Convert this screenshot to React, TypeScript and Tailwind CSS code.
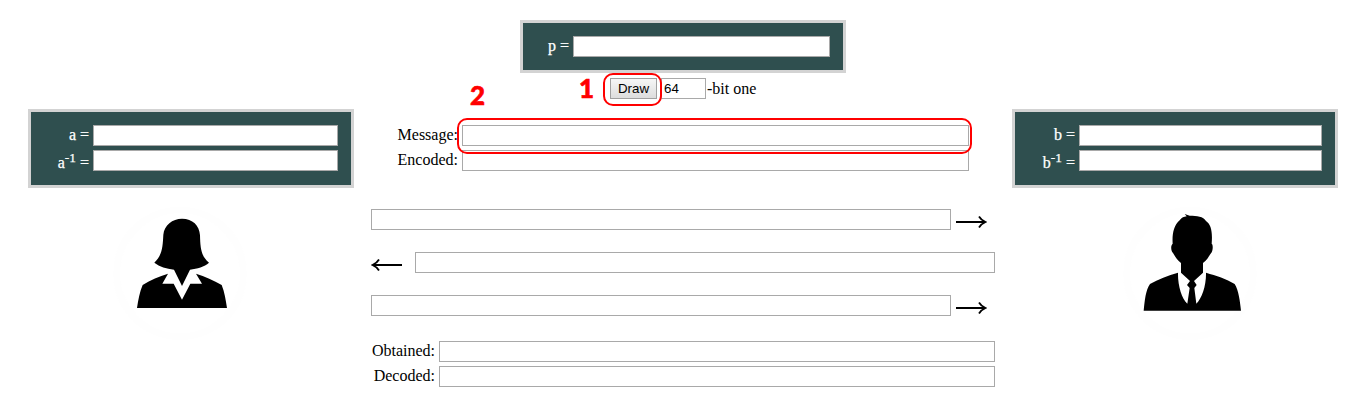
import type { ReactNode } from 'react';

function Field({ className, value, label }: { className: string; value?: string; label: string }) {
  return (
    <input
      type="text"
      aria-label={label}
      defaultValue={value}
      className={`block h-[21px] shrink-0 border border-[#a9a9a9] bg-white px-[2px] font-['Liberation_Sans',sans-serif] text-[13.333px] leading-none text-black outline-none ${className}`}
    />
  );
}

function Panel({ children }: { children: ReactNode }) {
  return (
    <div className="flex w-[326px] flex-col gap-1 border-3 border-[#d3d3d3] bg-[#2f4f4f] px-[13px] pt-[13px] text-white [-webkit-text-stroke:0.25px_white]">
      {children}
    </div>
  );
}

function Row({ label, className = '', children }: { label: ReactNode; className?: string; children: ReactNode }) {
  return (
    <div className={`flex h-[21px] justify-end ${className}`}>
      <span className="mr-1 whitespace-pre leading-[20px]">{label}</span>
      {children}
    </div>
  );
}

function Inverse({ name }: { name: string }) {
  return (
    <span className="relative top-[3px]">
      {name}
      <sup className="-top-[6px] text-[13.333px] leading-none">-1</sup> =
    </span>
  );
}

function Arrow({ left = false }: { left?: boolean }) {
  return (
    <svg width="31" height="13" viewBox="0 0 31 13" fill="none" className={left ? '-scale-x-100' : ''}>
      <path d="M0 7H29" stroke="black" strokeWidth="2" />
      <path d="M23 1.5Q25 5 29.5 7Q25 9 23 12.5" stroke="black" strokeWidth="1.8" />
    </svg>
  );
}

function Woman() {
  return (
    <svg width="160" height="150" viewBox="0 0 480 450">
      <circle cx="240" cy="235" r="190" fill="none" stroke="#fefefe" strokeWidth="20" />
      <path d="M246 71C278 71 298 91 300 121C301 162 304 184 327 203C313 216 292 221 270 224L246 273L222 224C199 221 179 215 163 203C187 180 188 156 190 119C193 90 217 71 246 71Z" />
      <path d="M204 236L187 266H221L246 314L271 266H306L288 236C315 244 341 256 365 270C374 292 377 315 381 339H111C115 314 119 291 128 270C152 254 177 244 204 236Z" />
    </svg>
  );
}

function Man() {
  return (
    <svg width="160" height="150" viewBox="0 0 480 450">
      <circle cx="240" cy="235" r="190" fill="none" stroke="#fefefe" strokeWidth="20" />
      <path d="M224 57L239 62C261 62 280 64 288 78C303 88 308 109 305 146C310 149 309 169 303 175C297 182 292 195 279 204V233L252 258L260 270L253 279L259 326C276 310 289 271 288 233C319 242 349 251 374 267C386 286 390 319 393 347H101C104 318 107 284 120 267C144 252 174 242 204 233C203 271 215 310 232 326L239 279L231 270L240 258L213 233V204C200 194 195 183 189 174C182 168 182 150 188 146C186 119 191 90 209 76C215 68 222 65 230 64Z" />
    </svg>
  );
}

export default function App() {
  return (
    <main className="relative h-[417px] w-[1366px] overflow-hidden bg-white pt-5 font-['Liberation_Serif',serif] text-base text-black">
      <div className="ml-[520px] flex h-[53px] w-[326px]">
        <Panel>
          <Row label="p =">
            <Field label="p" className="w-[257px]" />
          </Row>
        </Panel>
      </div>
      <div className="mt-[5px] ml-[610px] flex h-[21px]">
        <button className="h-[21px] w-[47px] border border-[#a0a0a0] bg-linear-to-b from-[#f6f6f6] to-[#dddddd] font-['Liberation_Sans',sans-serif] text-[13.333px] leading-[19px]">
          Draw
        </button>
        <Field label="Bits" value="64" className="ml-1 w-[45px]" />
        <span className="ml-px leading-[21px]">-bit one</span>
      </div>

      <div className="mt-[10px] ml-7 flex gap-[17px]">
        <section className="w-[326px]">
          <div className="flex h-[79px]">
            <Panel>
              <Row label="a =">
                <Field label="a" className="w-[245px]" />
              </Row>
              <Row label={<Inverse name="a" />}>
                <Field label="Inverse of a" className="w-[245px]" />
              </Row>
            </Panel>
          </div>
          <div className="mt-[7px] ml-[72px]">
            <Woman />
          </div>
        </section>

        <section className="w-[624px] pt-4">
          <div className="flex w-[598px] flex-col gap-1">
            <Row label="Message:">
              <Field label="Message" className="w-[507px]" />
            </Row>
            <Row label="Encoded:">
              <Field label="Encoded" className="w-[507px]" />
            </Row>
          </div>
          <div className="mt-[38px] flex flex-col gap-[22px]">
            <div className="flex h-[21px] gap-[5px]">
              <Field label="First transmission" className="w-[580px]" />
              <span className="pt-[6px]"><Arrow /></span>
            </div>
            <div className="flex h-[21px] justify-between">
              <span className="pt-[6px]"><Arrow left /></span>
              <Field label="Second transmission" className="w-[580px]" />
            </div>
            <div className="flex h-[21px] gap-[5px]">
              <Field label="Third transmission" className="w-[580px]" />
              <span className="pt-[6px]"><Arrow /></span>
            </div>
          </div>
          <div className="mt-[25px] flex flex-col gap-1">
            <Row label="Obtained:">
              <Field label="Obtained" className="w-[556px]" />
            </Row>
            <Row label="Decoded:">
              <Field label="Decoded" className="w-[556px]" />
            </Row>
          </div>
        </section>

        <section className="w-[326px]">
          <div className="flex h-[79px]">
            <Panel>
              <Row label="b =">
                <Field label="b" className="w-[243px]" />
              </Row>
              <Row label={<Inverse name="b" />}>
                <Field label="Inverse of b" className="w-[243px]" />
              </Row>
            </Panel>
          </div>
          <div className="mt-[7px] ml-[98px]">
            <Man />
          </div>
        </section>
      </div>

      <div className="pointer-events-none absolute top-[73px] left-[603px] h-[33px] w-[59px] rounded-[10px] border-2 border-[#ff0000]" />
      <div className="pointer-events-none absolute top-[118px] left-[457px] h-[36px] w-[515px] rounded-[10px] border-2 border-[#ff0000]" />
      <span className="absolute top-[74px] left-[579px] font-['Lato',sans-serif] text-[26px] leading-[28px] font-black text-[#ff0000] [-webkit-text-stroke:0.6px_#ff0000]">1</span>
      <span className="absolute top-[81px] left-[470px] font-['Lato',sans-serif] text-[26px] leading-[28px] font-black text-[#ff0000] [-webkit-text-stroke:0.6px_#ff0000]">2</span>
    </main>
  );
}
